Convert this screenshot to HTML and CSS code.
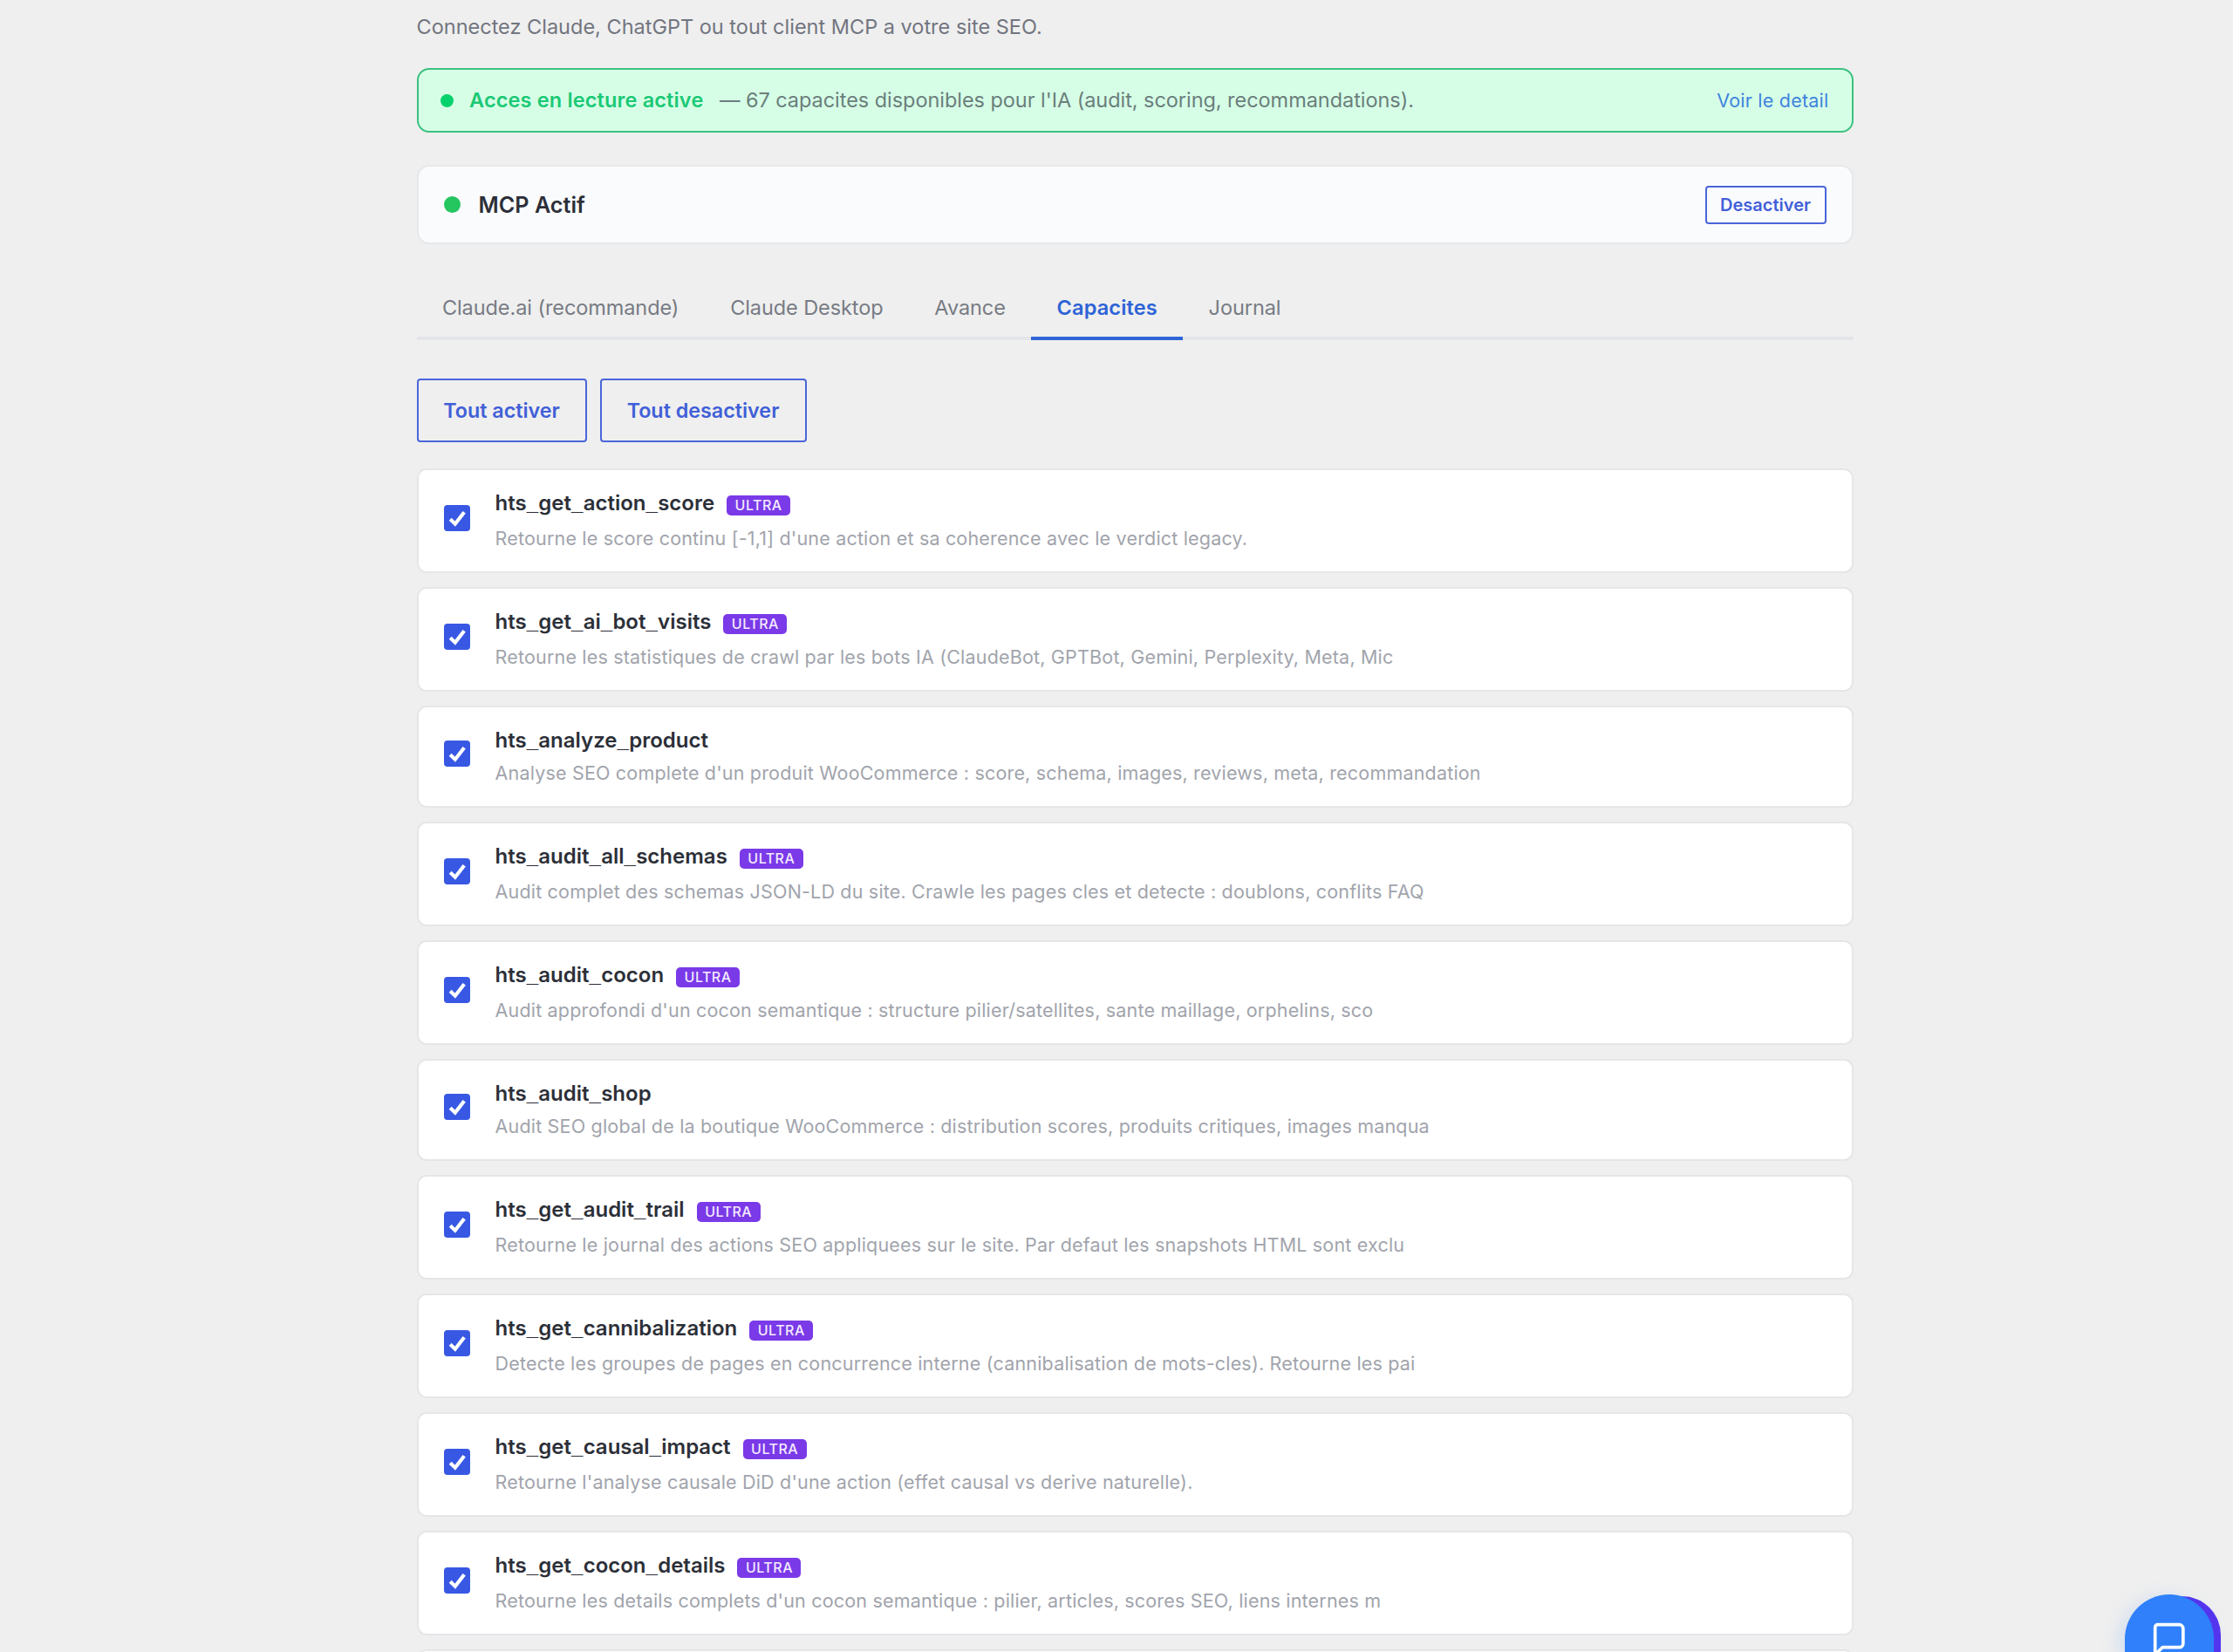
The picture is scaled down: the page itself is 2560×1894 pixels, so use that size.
FILE: index.html
```html
<!DOCTYPE html>
<html lang="fr">
<head>
<meta charset="utf-8">
<title>MCP - Capacites</title>
<link rel="stylesheet" href="styles.css">
</head>
<body>
<main class="page">
  <p class="intro">Connectez Claude, ChatGPT ou tout client MCP a votre site SEO.</p>

  <div class="notice">
    <span class="notice-dot"></span>
    <strong class="notice-title">Acces en lecture active</strong>
    <span class="notice-text">— 67 capacites disponibles pour l'IA (audit, scoring, recommandations).</span>
    <a class="notice-link">Voir le detail</a>
  </div>

  <div class="status">
    <span class="status-dot"></span>
    <span class="status-label">MCP Actif</span>
    <button class="btn btn-small">Desactiver</button>
  </div>

  <nav class="tabs">
    <a class="tab">Claude.ai (recommande)</a>
    <a class="tab">Claude Desktop</a>
    <a class="tab">Avance</a>
    <a class="tab tab-active">Capacites</a>
    <a class="tab">Journal</a>
  </nav>

  <div class="actions">
    <button class="btn">Tout activer</button>
    <button class="btn">Tout desactiver</button>
  </div>

  <svg width="0" height="0" class="defs">
    <symbol id="check" viewBox="0 0 30 30"><path d="M7.2 16.2 L12.8 21.7 L23.2 8.2" fill="none" stroke="#fff" stroke-width="4.2"/></symbol>
  </svg>

  <div class="list">
    <div class="card ultra"><span class="box"><svg><use href="#check"/></svg></span><div class="info"><div class="name"><span>hts<i>_</i>get<i>_</i>action<i>_</i>score</span><span class="badge">ULTRA</span></div><div class="desc">Retourne le score continu [-1,1] d'une action et sa coherence avec le verdict legacy.</div></div></div>
    <div class="card ultra"><span class="box"><svg><use href="#check"/></svg></span><div class="info"><div class="name"><span>hts<i>_</i>get<i>_</i>ai<i>_</i>bot<i>_</i>visits</span><span class="badge">ULTRA</span></div><div class="desc">Retourne les statistiques de crawl par les bots IA (ClaudeBot, GPTBot, Gemini, Perplexity, Meta, Mic</div></div></div>
    <div class="card"><span class="box"><svg><use href="#check"/></svg></span><div class="info"><div class="name"><span>hts<i>_</i>analyze<i>_</i>product</span></div><div class="desc">Analyse SEO complete d'un produit WooCommerce : score, schema, images, reviews, meta, recommandation</div></div></div>
    <div class="card ultra"><span class="box"><svg><use href="#check"/></svg></span><div class="info"><div class="name"><span>hts<i>_</i>audit<i>_</i>all<i>_</i>schemas</span><span class="badge">ULTRA</span></div><div class="desc">Audit complet des schemas JSON-LD du site. Crawle les pages cles et detecte : doublons, conflits FAQ</div></div></div>
    <div class="card ultra"><span class="box"><svg><use href="#check"/></svg></span><div class="info"><div class="name"><span>hts<i>_</i>audit<i>_</i>cocon</span><span class="badge">ULTRA</span></div><div class="desc">Audit approfondi d'un cocon semantique : structure pilier/satellites, sante maillage, orphelins, sco</div></div></div>
    <div class="card"><span class="box"><svg><use href="#check"/></svg></span><div class="info"><div class="name"><span>hts<i>_</i>audit<i>_</i>shop</span></div><div class="desc">Audit SEO global de la boutique WooCommerce : distribution scores, produits critiques, images manqua</div></div></div>
    <div class="card ultra"><span class="box"><svg><use href="#check"/></svg></span><div class="info"><div class="name"><span>hts<i>_</i>get<i>_</i>audit<i>_</i>trail</span><span class="badge">ULTRA</span></div><div class="desc">Retourne le journal des actions SEO appliquees sur le site. Par defaut les snapshots HTML sont exclu</div></div></div>
    <div class="card ultra"><span class="box"><svg><use href="#check"/></svg></span><div class="info"><div class="name"><span>hts<i>_</i>get<i>_</i>cannibalization</span><span class="badge">ULTRA</span></div><div class="desc">Detecte les groupes de pages en concurrence interne (cannibalisation de mots-cles). Retourne les pai</div></div></div>
    <div class="card ultra"><span class="box"><svg><use href="#check"/></svg></span><div class="info"><div class="name"><span>hts<i>_</i>get<i>_</i>causal<i>_</i>impact</span><span class="badge">ULTRA</span></div><div class="desc">Retourne l'analyse causale DiD d'une action (effet causal vs derive naturelle).</div></div></div>
    <div class="card ultra"><span class="box"><svg><use href="#check"/></svg></span><div class="info"><div class="name"><span>hts<i>_</i>get<i>_</i>cocon<i>_</i>details</span><span class="badge">ULTRA</span></div><div class="desc">Retourne les details complets d'un cocon semantique : pilier, articles, scores SEO, liens internes m</div></div></div>
    <div class="card card-next"></div>
  </div>
</main>

<div class="chat-back"></div>
<div class="chat">
  <svg class="chat-icon" viewBox="0 0 40 44"><path d="M3.7 36 V6.7 a3 3 0 0 1 3-3 H31.3 a4.5 4.5 0 0 1 4.5 4.5 V25.2 a4.5 4.5 0 0 1 -4.5 4.5 H12 L3.7 38 Z" fill="none" stroke="#fff" stroke-width="3.7" stroke-linejoin="round"/></svg>
</div>
</body>
</html>
```

FILE: styles.css
```css
* { box-sizing: border-box; }

body {
  margin: 0;
  height: 1894px;
  overflow: hidden;
  background: #efefef;
  font-family: Inter, "Liberation Sans", sans-serif;
  font-size: 24px;
  color: #2c2f38;
}

.page {
  width: 1647px;
  height: 1894px;
  margin-left: 477.5px;
  padding-top: 12px;
  overflow: hidden;
}

.intro {
  margin: 0 0 28px;
  line-height: 38px;
  font-size: 23.5px;
  color: #72757f;
}

.notice {
  display: flex;
  align-items: center;
  height: 74px;
  padding: 0 26px 0 25px;
  border: 2px solid #3cc181;
  border-radius: 14px;
  background: #d6fee7;
  font-size: 23.5px;
  line-height: 30px;
  white-space: nowrap;
}
.notice-dot {
  width: 15px;
  height: 15px;
  margin-right: 18.5px;
  border-radius: 50%;
  background: #06d26c;
}
.notice-title {
  margin-right: 18.5px;
  font-weight: 600;
  letter-spacing: .15px;
  color: #1bc975;
}
.notice-text { letter-spacing: -.05px; color: #6b7f7b; }
.notice-link {
  margin-left: auto;
  font-size: 21.5px;
  letter-spacing: .23px;
  color: #3f83de;
}

.status {
  display: flex;
  align-items: center;
  height: 91px;
  margin-top: 37px;
  padding: 0 29px;
  border: 2px solid #e6e8ea;
  border-radius: 14px;
  background: #fafbfd;
}
.status-dot {
  width: 19px;
  height: 19px;
  margin-right: 21px;
  border-radius: 50%;
  background: #25c560;
}
.status-label { font-size: 25.2px; font-weight: 600; }

.btn {
  height: 73px;
  padding: 0;
  border: 2px solid #4a66da;
  border-radius: 4px;
  background: transparent;
  font-family: inherit;
  font-size: 23.3px;
  font-weight: 600;
  color: #415fd8;
  white-space: nowrap;
}
.btn-small {
  width: 139px;
  height: 44px;
  margin-left: auto;
  font-size: 20px;
}

.tabs {
  display: flex;
  height: 75px;
  margin-top: 35px;
  border-bottom: 4px solid #e4e5e9;
}
.tab {
  height: 75px;
  padding: 0 29.4px;
  line-height: 75px;
  font-size: 23.5px;
  letter-spacing: -.08px;
  color: #777b84;
}
.tab-active {
  border-bottom: 4px solid #2d65d8;
  font-weight: 600;
  letter-spacing: .15px;
  color: #2d63d6;
}

.actions {
  display: flex;
  gap: 15px;
  margin-top: 44px;
}
.actions .btn:first-child { width: 195px; }
.actions .btn:last-child { width: 237px; }

.defs { display: block; }

.list {
  display: flex;
  flex-direction: column;
  gap: 16px;
  margin-top: 30px;
}
.card {
  display: flex;
  align-items: center;
  flex: none;
  height: 117px;
  padding-left: 29px;
  border: 2px solid #e5e6e9;
  border-radius: 11px;
  background: #fff;
}
.card.ultra { height: 120px; }
.box {
  width: 30px;
  height: 30px;
  margin: 0 29px 7px 0;
  border-radius: 4px;
  background: #3858e4;
}
.box svg { display: block; width: 30px; height: 30px; }
.info { align-self: flex-start; padding-top: 22px; white-space: nowrap; }
.name {
  display: flex;
  align-items: center;
  height: 32px;
  font-size: 24px;
  font-weight: 600;
  line-height: 32px;
}
/* wide underscores between the words of a tool name */
.name i {
  font-family: "Liberation Sans", sans-serif;
  font-style: normal;
  letter-spacing: .3px;
  line-height: 1;
}
.desc {
  margin-top: 6px;
  line-height: 30px;
  font-size: 21.5px;
  letter-spacing: .185px;
  color: #a1a4ac;
}
.ultra .desc { margin-top: 9px; }
.badge {
  width: 73px;
  height: 23px;
  margin: 5px 0 0 14px;
  border-radius: 5px;
  background: #7a3ae8;
  color: #f4eaff;
  font-size: 16px;
  font-weight: 500;
  line-height: 23px;
  letter-spacing: .5px;
  text-align: center;
}

.chat, .chat-back { position: absolute; }
.chat-back {
  left: 2457px;
  top: 1830px;
  width: 89px;
  height: 64px;
  border-radius: 44.5px 44.5px 0 0;
  background: #5533ee;
}
.chat {
  left: 2436px;
  top: 1828px;
  width: 102px;
  height: 66px;
  border-radius: 51px 51px 0 0;
  background: #2f80fa;
  box-shadow: -4px 6px 24px rgba(47, 128, 250, .2);
  overflow: hidden;
}
.chat-icon { display: block; width: 40px; height: 44px; margin: 31px 0 0 31px; }
```
